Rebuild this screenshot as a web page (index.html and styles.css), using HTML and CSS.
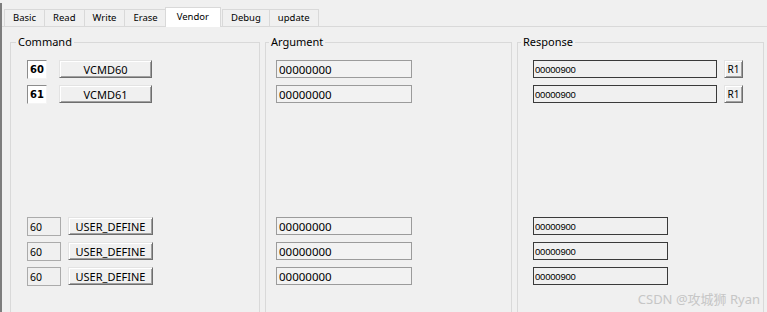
FILE: index.html
```html
<!DOCTYPE html>
<html lang="en">
<head>
<meta charset="UTF-8">
<title>Vendor</title>
<link rel="stylesheet" href="styles.css">
</head>
<body>
    <div class="window">
        <div class="tabs">
            <div class="tab">Basic</div>
            <div class="tab">Read</div>
            <div class="tab">Write</div>
            <div class="tab">Erase</div>
            <div class="tab active">Vendor</div>
            <div class="tab">Debug</div>
            <div class="tab">update</div>
        </div>
        <div class="panel">
            <!-- Command -->
            <fieldset class="group group-cmd">
                <legend>Command</legend>
                <div class="rows">
                    <div class="row"><span class="num num-bold">60</span><span class="btn btn-vcmd">VCMD60</span></div>
                    <div class="row"><span class="num num-bold">61</span><span class="btn btn-vcmd">VCMD61</span></div>
                </div>
                <div class="rows rows-low">
                    <div class="row"><span class="num num-edit">60</span><span class="btn btn-user">USER_DEFINE</span></div>
                    <div class="row"><span class="num num-edit">60</span><span class="btn btn-user">USER_DEFINE</span></div>
                    <div class="row"><span class="num num-edit">60</span><span class="btn btn-user">USER_DEFINE</span></div>
                </div>
            </fieldset>
            <!-- Argument -->
            <fieldset class="group group-arg">
                <legend>Argument</legend>
                <div class="rows">
                    <div class="row"><span class="arg">00000000</span></div>
                    <div class="row"><span class="arg">00000000</span></div>
                </div>
                <div class="rows rows-low">
                    <div class="row"><span class="arg">00000000</span></div>
                    <div class="row"><span class="arg">00000000</span></div>
                    <div class="row"><span class="arg">00000000</span></div>
                </div>
            </fieldset>
            <!-- Response -->
            <fieldset class="group group-resp">
                <legend>Response</legend>
                <div class="rows">
                    <div class="row"><span class="resp resp-wide">00000900</span><span class="btn btn-r1">R1</span></div>
                    <div class="row"><span class="resp resp-wide">00000900</span><span class="btn btn-r1">R1</span></div>
                </div>
                <div class="rows rows-low">
                    <div class="row"><span class="resp">00000900</span></div>
                    <div class="row"><span class="resp">00000900</span></div>
                    <div class="row"><span class="resp">00000900</span></div>
                </div>
            </fieldset>
        </div>
        <div class="watermark">CSDN @攻城狮 Ryan</div>
    </div>
</body>
</html>
```
FILE: styles.css
```css
body {
    margin: 0;
    background: #f0f0f0;
    font-family: "Noto Sans", Arial, sans-serif;
    color: #000;
    overflow: hidden;
}
.window {
    position: relative;
    height: 309px;
    margin-top: 3px;
    border-left: 2px solid #7d7d7d;
    overflow: hidden;
}
.tabs {
    display: flex;
    align-items: flex-end;
    height: 23px;
    padding-left: 2px;
    border-bottom: 1px solid #d9d9d9;
}
.tab {
    height: 17px;
    box-sizing: border-box;
    padding: 0 8px;
    border: 1px solid #d9d9d9;
    border-bottom: none;
    margin-right: -1px;
    font-size: 9.5px;
    line-height: 16px;
    text-align: center;
    background: #f0f0f0;
}
.tab.active {
    position: relative;
    z-index: 1;
    height: 20px;
    margin: 0 1px -1px -1px;
    padding: 0 11px;
    background: #fff;
    line-height: 17px;
}
.panel {
    display: flex;
    gap: 5px;
    padding: 8px 0 0 8px;
}
.group {
    margin: 0;
    padding: 11px 0 0 16px;
    height: 300px;
    min-width: 0;
    box-sizing: border-box;
    border: 1px solid #d9d9d9;
}
.group legend {
    margin-left: -11px;
    padding: 0 2px;
    font-size: 11px;
    line-height: 14px;
}
.group-cmd { width: 250px; }
.group-arg { width: 247px; padding-left: 10px; }
.group-arg legend { margin-left: -7px; }
.group-resp { width: 247px; padding-left: 15px; }
.group-resp legend { margin-left: -12px; }
.rows {
    display: flex;
    flex-direction: column;
    gap: 7px;
}
.rows-low { margin-top: 114px; }
.row {
    display: flex;
    align-items: flex-start;
    height: 18px;
}
.num, .btn, .arg, .resp {
    box-sizing: border-box;
    height: 18px;
    display: flex;
    align-items: center;
}
.num-bold {
    width: 20px;
    height: 19px;
    margin-right: 12px;
    padding-left: 2px;
    background: #fff;
    border: 1px solid;
    border-color: #8c8c8c #f4f4f4 #f4f4f4 #8c8c8c;
    font-family: "DejaVu Sans", sans-serif;
    font-weight: bold;
    font-size: 10px;
}
.num-edit {
    width: 34px;
    height: 19px;
    margin-right: 7px;
    padding-left: 2px;
    background: #f0f0f0;
    border: 1px solid #ababab;
    font-size: 10.5px;
}
.btn {
    justify-content: center;
    background: #f0f0f0;
    border: 1px solid;
    border-color: #e3e3e3 #6e6e6e #6e6e6e #e3e3e3;
    box-shadow: inset 1px 1px #fff, inset -1px -1px #a0a0a0;
    font-size: 11px;
}
.btn-vcmd { width: 93px; }
.btn-user { width: 85px; }
.btn-r1 {
    width: 19px;
    margin-left: 7px;
    font-size: 10px;
}
.arg {
    width: 136px;
    padding-left: 2px;
    background: #f2f2f2;
    border: 1px solid #9b9b9b;
    font-size: 11.5px;
}
.resp {
    width: 135px;
    padding-left: 1px;
    background: #f0f0f0;
    border: 1px solid #3a3a3a;
    font-family: "Liberation Sans", Arial, sans-serif;
    font-size: 9.5px;
    letter-spacing: -0.2px;
}
.resp-wide { width: 184px; }
.watermark {
    position: absolute;
    right: 7px;
    bottom: 4px;
    color: #c6c6c6;
    font-family: "Noto Sans", "Noto Sans CJK SC", sans-serif;
    font-size: 13px;
}
```
